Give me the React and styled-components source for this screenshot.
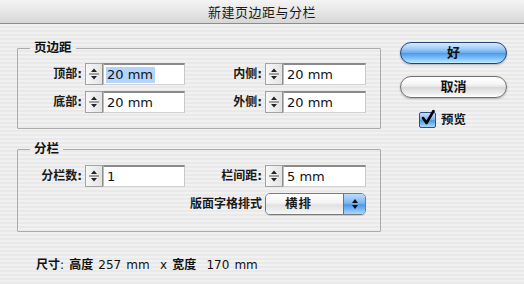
import styled, { createGlobalStyle } from 'styled-components';

const GlobalStyle = createGlobalStyle`
  html, body {
    margin: 0;
    padding: 0;
  }
  body {
    font-family: "DejaVu Sans", "Noto Sans CJK SC", sans-serif;
    color: #000;
  }
`;

const FONT = `"DejaVu Sans", "Noto Sans CJK SC", sans-serif`;

const Window = styled.div`
  width: 524px;
  height: 284px;
  overflow: hidden;
  background: repeating-linear-gradient(
    to bottom,
    #f1f1f1 0px,
    #f1f1f1 2px,
    #e9e9e9 2px,
    #e9e9e9 4px
  );
`;

const TitleBar = styled.div`
  height: 23px;
  border-bottom: 1px solid #8c8c8c;
  background: linear-gradient(to bottom, #f4f4f4 0%, #e6e6e6 50%, #d6d6d6 100%);
  display: flex;
  align-items: center;
  justify-content: center;
  font: 13px ${FONT};
  letter-spacing: 0.5px;
  color: #1a1a1a;
`;

const Body = styled.div`
  display: flex;
  gap: 19px;
  padding: 16px 0 0 17px;
`;

const LeftColumn = styled.div`
  width: 364px;
  display: flex;
  flex-direction: column;
  gap: 12px;
`;

const Group = styled.fieldset`
  margin: 0;
  border: 1px solid #ababab;
  border-radius: 1px;
  padding: ${p => p.$pad};
  min-width: 0;
`;

const Legend = styled.legend`
  margin-left: 12px;
  padding: 0 4px;
  font: bold 12.5px/16px ${FONT};
  color: #111;
`;

const Rows = styled.div`
  display: flex;
  flex-direction: column;
  gap: ${p => p.$gap || 6}px;
`;

const Row = styled.div`
  display: grid;
  grid-template-columns: 67px 100px 80px 101px;
  align-items: center;
`;

const Label = styled.span`
  grid-column: ${p => p.$col || 'auto'};
  justify-self: end;
  padding-right: 3px;
  white-space: nowrap;
  font: bold 12px/16px ${FONT};
  color: #1a1a1a;
`;

const Spin = styled.div`
  display: flex;
  height: 22px;
`;

const Stepper = styled.div`
  width: 16px;
  flex: none;
  border: 1px solid #a3a3a3;
  border-right-color: #8e8e8e;
  background: linear-gradient(to right, #f7f7f7, #e4e4e4);
  display: flex;
  align-items: center;
  justify-content: center;
`;

const Field = styled.div`
  flex: 1;
  background: #fff;
  border-top: 2px solid #8a8a8a;
  border-left: 1px solid #bdbdbd;
  border-right: 1px solid #c8c8c8;
  border-bottom: 1px solid #d2d2d2;
  display: flex;
  align-items: center;
  padding-left: 2px;
  font: 13px/16px ${FONT};
  color: #111;
`;

const Value = styled.span`
  background: ${p => (p.$selected ? '#b4d4fc' : 'transparent')};
  padding: 0 2px 0 1px;
`;

const PopUp = styled.div`
  height: 20px;
  display: flex;
  border: 1px solid #7a7a7a;
  border-radius: 5px;
  overflow: hidden;
  box-shadow: 0 1px 1px rgba(0, 0, 0, 0.15);
`;

const PopUpText = styled.div`
  flex: 1;
  display: flex;
  align-items: center;
  padding-left: 19px;
  letter-spacing: 1px;
  background: linear-gradient(to bottom, #ffffff 0%, #f3f3f3 45%, #e1e1e1 55%, #f6f6f6 100%);
  font: bold 12.5px/16px ${FONT};
  color: #1a1a1a;
`;

const PopUpArrows = styled.div`
  width: 21px;
  border-left: 1px solid #4a76b8;
  background: linear-gradient(to bottom, #bcdcfa 0%, #7fb7ef 45%, #4e98e8 55%, #a9d8ff 100%);
  display: flex;
  align-items: center;
  justify-content: center;
`;

const Footer = styled.div`
  padding: 13px 0 0 19px;
  font: 12px/16px ${FONT};
  word-spacing: 1.3px;
  color: #111;
  white-space: pre;
`;

const FooterWord = styled.span`
  font-weight: bold;
`;

const RightColumn = styled.div`
  width: 107px;
  padding-top: 2px;
  display: flex;
  flex-direction: column;
  gap: 12px;
`;

const AquaButton = styled.div`
  height: 20px;
  border-radius: 11px;
  border: 1px solid ${p => (p.$default ? '#23407d' : '#6f6f6f')};
  display: flex;
  align-items: center;
  justify-content: center;
  font: bold 13px/16px ${FONT};
  color: #111;
  box-shadow: 0 1px 2px rgba(0, 0, 0, 0.25);
  background: ${p =>
    p.$default
      ? 'linear-gradient(to bottom, #d9ecfd 0%, #9ccbf6 30%, #6aabef 50%, #4f9ae9 52%, #8fd0ff 85%, #c6ecff 100%)'
      : 'linear-gradient(to bottom, #ffffff 0%, #f6f6f6 35%, #e3e3e3 50%, #d8d8d8 52%, #f0f0f0 85%, #ffffff 100%)'};
`;

const CheckRow = styled.div`
  display: flex;
  align-items: center;
  gap: 5px;
  padding-left: 19px;
  margin-top: 2px;
  font: bold 12.5px/16px ${FONT};
  color: #1a1a1a;
`;

const CheckBox = styled.div`
  width: 15px;
  height: 14px;
  border: 1px solid #2d4f8f;
  border-radius: 2px;
  background: linear-gradient(to bottom, #c8e3fb 0%, #7db5ee 45%, #4f98e6 55%, #a9d7ff 100%);
  position: relative;
`;

const Tick = styled.svg`
  position: absolute;
  left: 1px;
  top: -4px;
`;

function StepArrows() {
  return (
    <svg width="12" height="18" viewBox="0 0 12 18">
      <path d="M6 3.5 L9 7 L3 7 Z" fill="#222" />
      <rect x="1" y="8.5" width="10" height="1" fill="#555" />
      <path d="M6 14.5 L9 11 L3 11 Z" fill="#222" />
    </svg>
  );
}

function SpinField({ value, selected }) {
  return (
    <Spin>
      <Stepper>
        <StepArrows />
      </Stepper>
      <Field>
        <Value $selected={selected}>{value}</Value>
      </Field>
    </Spin>
  );
}

export default function App() {
  return (
    <>
      <GlobalStyle />
      <Window>
        <TitleBar>新建页边距与分栏</TitleBar>
        <Body>
          <LeftColumn>
            <Group $pad="7px 0 15px 0">
              <Legend>页边距</Legend>
              <Rows>
                <Row>
                  <Label>顶部:</Label>
                  <SpinField value="20 mm" selected />
                  <Label>内侧:</Label>
                  <SpinField value="20 mm" />
                </Row>
                <Row>
                  <Label>底部:</Label>
                  <SpinField value="20 mm" />
                  <Label>外侧:</Label>
                  <SpinField value="20 mm" />
                </Row>
              </Rows>
            </Group>
            <Group $pad="8px 0 16px 0">
              <Legend>分栏</Legend>
              <Rows>
                <Row>
                  <Label>分栏数:</Label>
                  <SpinField value="1" />
                  <Label>栏间距:</Label>
                  <SpinField value="5 mm" />
                </Row>
                <Row>
                  <Label $col="1 / 4">版面字格排式</Label>
                  <PopUp>
                    <PopUpText>横排</PopUpText>
                    <PopUpArrows>
                      <svg width="8" height="12" viewBox="0 0 8 12">
                        <path d="M4 1 L7 5 L1 5 Z" fill="#111" />
                        <path d="M4 11 L7 7 L1 7 Z" fill="#111" />
                      </svg>
                    </PopUpArrows>
                  </PopUp>
                </Row>
              </Rows>
            </Group>
            <Footer>
              <FooterWord>尺寸</FooterWord>: <FooterWord>高度</FooterWord> 257 mm  x <FooterWord>宽度</FooterWord>  170 mm
            </Footer>
          </LeftColumn>
          <RightColumn>
            <AquaButton $default>好</AquaButton>
            <AquaButton>取消</AquaButton>
            <CheckRow>
              <CheckBox>
                <Tick width="14" height="17" viewBox="0 0 14 17">
                  <path d="M2 9 L5.5 14 L12.5 2" stroke="#000" strokeWidth="2.6" fill="none" strokeLinecap="round" strokeLinejoin="round" />
                </Tick>
              </CheckBox>
              预览
            </CheckRow>
          </RightColumn>
        </Body>
      </Window>
    </>
  );
}
